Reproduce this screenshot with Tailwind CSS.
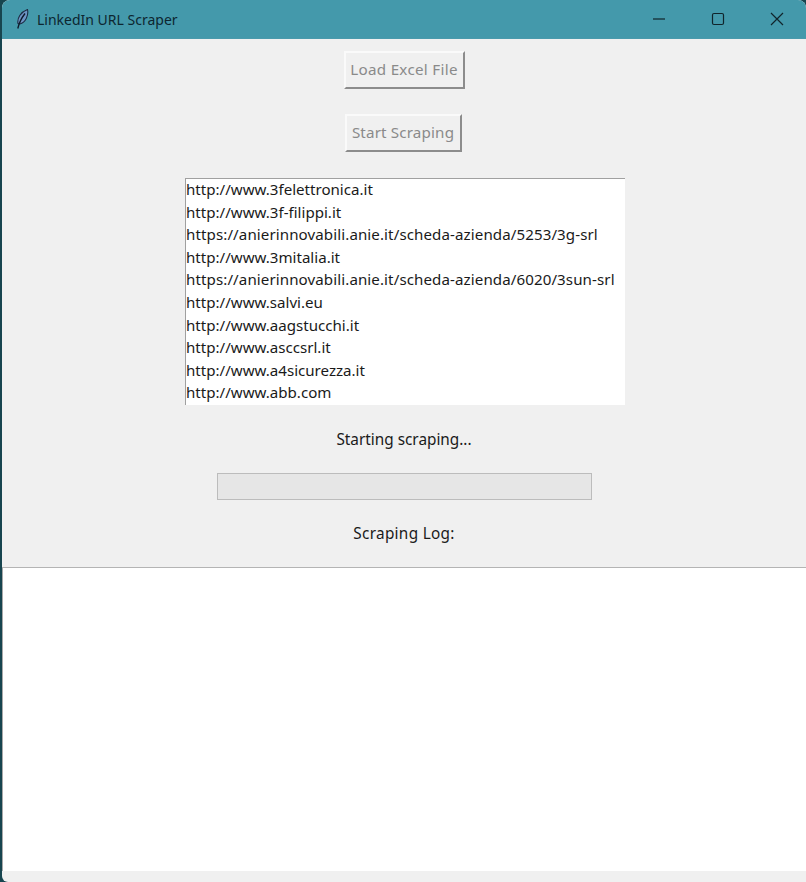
<!DOCTYPE html>
<html lang="en">
<head>
    <meta charset="UTF-8">
    <title>LinkedIn URL Scraper</title>
    <script src="https://cdn.jsdelivr.net/npm/@tailwindcss/browser@4"></script>
</head>
<body class="bg-[#17454f] font-['Noto_Sans',sans-serif] text-[15px] text-[#1a1a1a] overflow-hidden">
    <div class="w-[806px] h-[882px] pl-[2px]">
        <div class="h-full flex flex-col bg-[#f0f0f0] rounded-tl-[8px] rounded-tr-[8px] rounded-bl-[6px] overflow-hidden">
            <!-- title bar -->
            <header class="h-[39px] shrink-0 flex items-center bg-[#4499ab] border-b border-[#4a9aac]">
                <svg class="ml-[14px] w-[14px] h-[20px]" viewBox="0 0 14 20" fill="none">
                    <path d="M2 14.5C1 9.5 4.5 3 11.5 0.5C12.8 6.5 9.5 13.5 3.8 15Z" fill="#6d93c4" stroke="#1d2c45" stroke-width="1.1"/>
                    <path d="M1.8 19.5C3 14 5.5 9 9 4.5" stroke="#0f1a2b" stroke-width="1.4"/>
                </svg>
                <span class="ml-[7px] text-[14px] text-[#0d2630]">LinkedIn URL Scraper</span>
                <div class="ml-auto flex items-center">
                    <svg class="w-[14px] h-[14px] mr-[45px]" viewBox="0 0 14 14"><path d="M1 7H13" stroke="#10242b" stroke-width="1.2"/></svg>
                    <svg class="w-[14px] h-[14px] mr-[45px]" viewBox="0 0 14 14" fill="none"><rect x="1.5" y="1.5" width="11" height="11" rx="1.5" stroke="#10242b" stroke-width="1.2"/></svg>
                    <svg class="w-[14px] h-[14px] mr-[22px]" viewBox="0 0 14 14"><path d="M1 1L13 13M13 1L1 13" stroke="#10242b" stroke-width="1.2"/></svg>
                </div>
            </header>

            <main class="flex-1 flex flex-col items-center min-h-0">
                <button class="mt-[12px] w-[121px] h-[38px] pb-[2px] bg-[#f0f0f0] text-[#8a8a8a] border-2 border-[#fafafa] border-r-[#8c8c8c] border-b-[#8c8c8c] text-[15.2px] tracking-[0.3px]">Load Excel File</button>
                <button class="mt-[25px] w-[117px] h-[38px] pb-[2px] bg-[#f0f0f0] text-[#8a8a8a] border-2 border-[#fafafa] border-r-[#8c8c8c] border-b-[#8c8c8c] -translate-x-px text-[15.2px] tracking-[0.15px]">Start Scraping</button>

                <div class="mt-[26px] w-[440px] h-[227px] translate-x-px bg-white border-l border-t border-[#a0a0a0] overflow-hidden leading-[22.6px] whitespace-nowrap text-[15.1px]">
                    <div class="-mt-px">http://www.3felettronica.it</div>
                    <div>http://www.3f-filippi.it</div>
                    <div class="tracking-[0.1px]">https://anierinnovabili.anie.it/scheda-azienda/5253/3g-srl</div>
                    <div>http://www.3mitalia.it</div>
                    <div class="tracking-[0.1px]">https://anierinnovabili.anie.it/scheda-azienda/6020/3sun-srl</div>
                    <div>http://www.salvi.eu</div>
                    <div>http://www.aagstucchi.it</div>
                    <div>http://www.asccsrl.it</div>
                    <div>http://www.a4sicurezza.it</div>
                    <div>http://www.abb.com</div>
                </div>

                <p class="mt-[23px] h-[22px] leading-[22px] text-[15.33px]">Starting scraping...</p>

                <div class="mt-[23px] w-[375px] h-[27px] bg-[#e6e6e6] border border-[#bcbcbc]"></div>

                <p class="mt-[22px] h-[22px] leading-[22px] text-[15.33px] tracking-[0.3px]">Scraping Log:</p>

                <div class="mt-[23px] w-full flex-1 mb-[11px]">
                    <textarea class="block w-full h-full bg-white border-t border-l border-t-[#b4b4b4] border-l-[#a8a8a8] resize-none"></textarea>
                </div>
            </main>
        </div>
    </div>
</body>
</html>
